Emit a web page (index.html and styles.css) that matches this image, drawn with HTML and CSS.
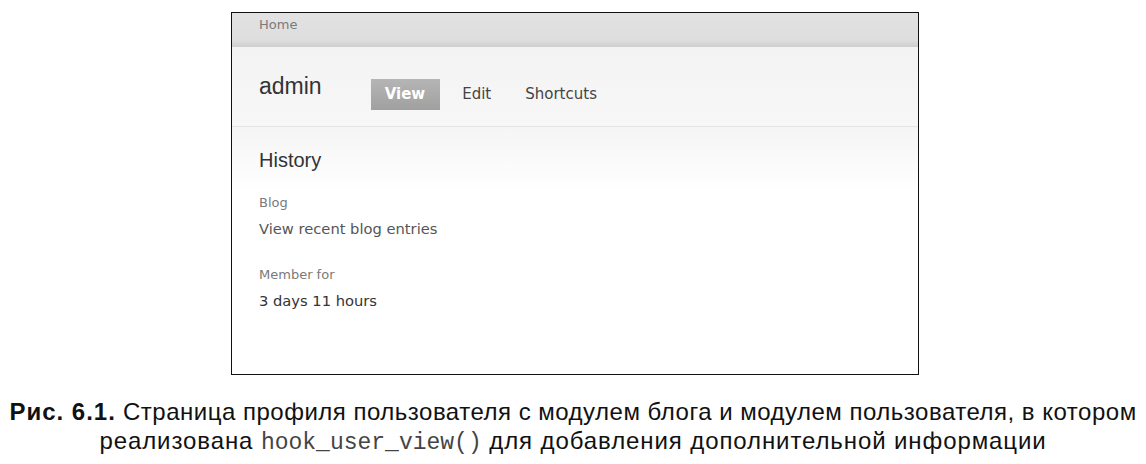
FILE: index.html
```html
<!DOCTYPE html>
<html lang="ru">
<head>
    <meta charset="UTF-8">
    <title>Рис. 6.1</title>
    <link rel="stylesheet" href="styles.css">
</head>
<body>
    <div class="figure">
        <div class="shot">
            <div class="breadcrumb">Home</div>
            <div class="page-head">
                <h1 class="page-title">admin</h1>
                <ul class="tabs">
                    <li class="tab active">View</li>
                    <li class="tab">Edit</li>
                    <li class="tab">Shortcuts</li>
                </ul>
            </div>
            <div class="content">
                <h2 class="section-title">History</h2>
                <dl class="profile">
                    <dt>Blog</dt>
                    <dd>View recent blog entries</dd>
                    <dt>Member for</dt>
                    <dd class="strong">3 days 11 hours</dd>
                </dl>
            </div>
        </div>
        <p class="caption">
            <span class="caption-line"><b>Рис. 6.1.</b> Страница профиля пользователя с модулем блога и модулем пользователя, в котором</span>
            <span class="caption-line wide">реализована <code>hook_user_view()</code> для добавления дополнительной информации</span>
        </p>
    </div>
</body>
</html>
```

FILE: styles.css
```css
body {
    margin: 0;
    padding: 0;
    background: #fff;
    font-family: "DejaVu Sans", sans-serif;
}

.figure {
    padding-top: 12px;
}

/* Screenshot frame */
.shot {
    margin-left: 231px;
    width: 686px;
    height: 361px;
    border: 1px solid #111;
    background: #fff;
    overflow: hidden;
}

.breadcrumb {
    height: 34px;
    box-sizing: border-box;
    padding: 4px 0 0 27px;
    font-size: 13px;
    line-height: 16px;
    color: #7a7a7a;
    background: linear-gradient(#e2e2e2, #dedede 80%, #cecece);
}

.page-head {
    height: 79px;
    display: flex;
    align-items: flex-start;
    padding-left: 27px;
    background: linear-gradient(#f3f3f3, #f7f7f7);
    border-bottom: 1px solid #e4e4e4;
}

.page-title {
    margin: 26px 0 0;
    font-family: "Liberation Sans", Arial, sans-serif;
    font-weight: normal;
    font-size: 23px;
    line-height: 26px;
    color: #333;
}

.tabs {
    list-style: none;
    margin: 32px 0 0 49px;
    padding: 0;
    display: flex;
}

.tab {
    height: 31px;
    line-height: 31px;
    font-size: 15px;
    color: #444;
    padding: 0 17px;
}

.tab.active {
    background: linear-gradient(#b5b5b5, #a0a0a0);
    color: #fff;
    font-weight: bold;
    padding: 0 15px 0 14px;
    margin-right: 5px;
}

.content {
    padding: 21px 27px 0;
    background: linear-gradient(#f5f5f5, #fff 64px);
}

.section-title {
    margin: 0 0 23px;
    font-family: "Liberation Sans", Arial, sans-serif;
    font-weight: normal;
    font-size: 20px;
    line-height: 24px;
    color: #333;
}

.profile {
    margin: 0;
}

.profile dt {
    font-size: 13px;
    line-height: 16px;
    color: #7a7a7a;
    margin-bottom: 9px;
}

.profile dd {
    margin: 0 0 29px;
    font-size: 14.7px;
    line-height: 18px;
    color: #555;
}

.profile dd.strong {
    color: #333;
}

/* Book caption */
.caption {
    margin: 22px 0 0;
    text-align: center;
    font-family: "Liberation Sans", Arial, sans-serif;
    font-size: 24px;
    line-height: 29px;
    color: #111;
}

.caption-line {
    display: block;
    letter-spacing: 0.5px;
}

.caption-line.wide {
    letter-spacing: 0.9px;
}

.caption b {
    letter-spacing: 1px;
}

.caption code {
    font-family: "Liberation Mono", monospace;
    font-size: 23px;
    letter-spacing: 0;
    color: #444;
}
```
